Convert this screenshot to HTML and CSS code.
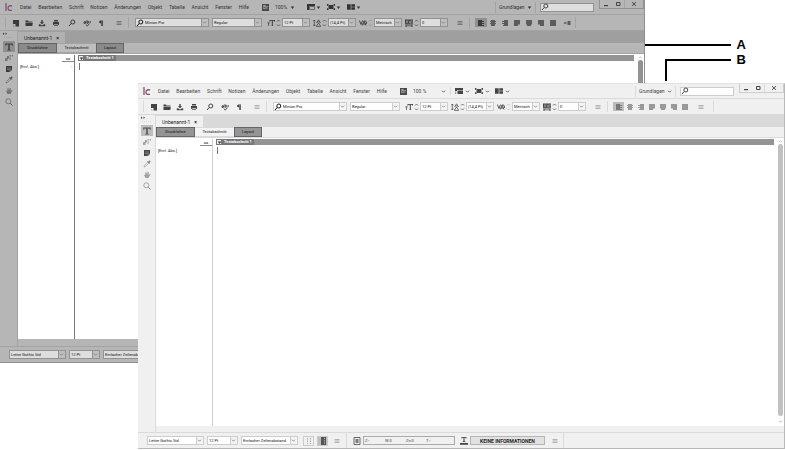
FILE: index.html
```html
<!DOCTYPE html>
<html lang="de">
<head>
<meta charset="utf-8">
<title>InCopy</title>
<link rel="stylesheet" href="styles.css">
</head>
<body>
<svg class="sprite" aria-hidden="true">
  <symbol id="logo" viewBox="0 0 8 8"><path d="M1 0v8M7 3Q3 2 3 5.300Q3 8 7 7.300" fill="none" stroke="#83526f" stroke-width="1.300"/></symbol>
  <symbol id="new" viewBox="0 0 8 8"><path d="M1 1h6v6.500H3.500V5H1z"/><path d="M1 5.500l2 2H1z" opacity=".3"/></symbol>
  <symbol id="open" viewBox="0 0 8 8"><path d="M.5 1.500h2.500l.5 1h4v1H.5zM.5 4h7.300L7.300 7H.5z"/></symbol>
  <symbol id="save" viewBox="0 0 8 8"><path d="M3.300 1h1.400v2.300h1.500L4 5.300 1.800 3.300h1.500zM.8 5.300h1.400l1 .9h1.600l1-.9h1.400v2H.8z"/></symbol>
  <symbol id="print" viewBox="0 0 8 8"><path d="M2 1h4v1.500H2zM1 3h6v3H6.200V5H1.800v1H1z"/><path d="M2 5.500h4V7H2z" opacity=".7"/></symbol>
  <symbol id="search" viewBox="0 0 8 8"><circle cx="4.800" cy="3" r="2" fill="none" stroke="currentColor"/><path d="M3.300 4.400L1 7" stroke="currentColor"/></symbol>
  <symbol id="spell" viewBox="0 0 8 8"><path d="M.5 3.500Q2.500 1 3 3.500Q1 3 1 4.500L3 4M4 1v3.500Q6.500 4 5.500 2.500L4 3M7.500 2Q6 3 7.500 4M3 5.500l1.200 1.700L6.500 4.500" fill="none" stroke="currentColor" stroke-width=".9"/></symbol>
  <symbol id="para" viewBox="0 0 8 8"><path d="M6 1.500H3.700Q2 1.600 2 3t2 1.400V7h.7V2h.5v5H6z"/></symbol>
  <symbol id="menu" viewBox="0 0 8 8"><path d="M1.500 2.500h5M1.500 4h5M1.500 5.500h5" stroke="currentColor" stroke-width=".7"/></symbol>
  <symbol id="size" viewBox="0 0 8 8"><path d="M2.500 1H8v1.700h-.6L7 1.800H5.800v4.700l.8.5H4.200l.6-.5V1.800H3.500l-.4.900h-.6zM.3 3.500h2.400v.8H1.900V7H1.200V4.300H.3z"/></symbol>
  <symbol id="lead" viewBox="0 0 8 8"><path d="M1.300 1v6M.3 2.200L1.300 1l1 1.200M.3 5.800L1.300 7l1-1.200M3.500 4L5.500.8 7.500 4M4.200 3h2.600M3.500 7l2-3 2 3M3 7.400h5" fill="none" stroke="currentColor" stroke-width=".7"/></symbol>
  <symbol id="kern" viewBox="0 0 8 8"><path d="M.4 1.500L2 5.500l1.500-4M3.300 6.500L5 2l2 4.500M4 5h2.500M5.500 1.500Q8 2 7.500 5" fill="none" stroke="currentColor" stroke-width=".9"/></symbol>
  <symbol id="track" viewBox="0 0 8 8"><path d="M0 .5h8v5H0zM.5 6h1v2h-1zM6.500 6h1v2h-1zM1 6.500h6v.7H1z"/><path d="M1 4.500l1-3 1 3M4 1.500l1 3 1-3M7 1v4" fill="none" stroke="#ddd" stroke-width=".5"/></symbol>
  <symbol id="step" viewBox="0 0 5 8"><path d="M1 2.500L2.500 1 4 2.500M1 5.500L2.500 7 4 5.500" fill="none" stroke="currentColor" stroke-width=".7"/></symbol>
  <symbol id="chev" viewBox="0 0 5 5"><path d="M1 1.700L2.500 3.200 4 1.700" fill="none" stroke="currentColor" stroke-width=".8"/></symbol>
  <symbol id="up" viewBox="0 0 5 5"><path d="M1 3.200L2.500 1.700 4 3.200" fill="none" stroke="currentColor" stroke-width=".8"/></symbol>
  <symbol id="tri" viewBox="0 0 5 5"><path d="M.8 1.500h3.400L2.500 4z"/></symbol>
  <symbol id="al" viewBox="0 0 8 8"><path d="M1 1h4v1h2v1H5v1h2v1H5v1h2v1H1z"/></symbol>
  <symbol id="ac" viewBox="0 0 8 8"><path d="M2 1h4v1h1v1H6v1h1v1H6v2H2V5H1V4h1V3H1V2h1z"/></symbol>
  <symbol id="ar" viewBox="0 0 8 8"><path d="M3 1h4v6H2V6h1V5H1V4h2V3H1V2h2z"/></symbol>
  <symbol id="jl" viewBox="0 0 8 8"><path d="M1 1h6v4.500H5V7H1z"/></symbol>
  <symbol id="jc" viewBox="0 0 8 8"><path d="M1 1h6v4.500H6V7H2V5.500H1z"/></symbol>
  <symbol id="jr" viewBox="0 0 8 8"><path d="M1 1h6v6H3V5.500H1z"/></symbol>
  <symbol id="jf" viewBox="0 0 8 8"><path d="M1 1h6v6H1z"/></symbol>
  <symbol id="flow" viewBox="0 0 8 8"><path d="M.5 4l2-1.500v1H4v1H2.500v1zM4.500 2h3v4h-3z"/></symbol>
  <symbol id="view" viewBox="0 0 8 8"><path d="M0 1h8v2H2v1H0zM2.500 3.500H8V7H2.500z"/><path d="M0 4.500h1.200V7H0z" opacity=".5"/></symbol>
  <symbol id="frame" viewBox="0 0 8 8"><path d="M0 1h8v2H2v4H0z"/><path d="M2.500 3.500h5v3h-5z" fill="none" stroke="currentColor" stroke-width=".6"/></symbol>
  <symbol id="screen" viewBox="0 0 8 8"><path d="M1.500 2h5v4h-5zM0 1h1.500v1H.8v1H0zM8 1H6.500v1h.7v1H8zM0 7h1.500V6H.8V5H0zM8 7H6.500V6h.7V5H8z"/></symbol>
  <symbol id="arrange" viewBox="0 0 8 8"><path d="M0 1.300h3.700v5.400H0zM4.300 1.300H8v2.400H4.300zM4.300 4.300H8v2.400H4.300z"/></symbol>
  <symbol id="type" viewBox="0 0 8 8"><path d="M.3.500h7.400v2.200h-.7l-.6-1.200H4.700v5l1.100.4v.6H2.200v-.6l1.100-.4v-5H1.600L1 2.700H.3z"/></symbol>
  <symbol id="notes" viewBox="0 0 8 8"><path d="M0 7V4.500l2-1V2h2v2L2.500 5v2zM4.500 1h1.300v1.500H4.500zM6.700 1H8v1.500H6.700zM4.500 3.300h1V6h-1z" opacity=".75"/></symbol>
  <symbol id="note" viewBox="0 0 8 8"><path d="M1 1h6v4L5 7H1z"/><path d="M2 3h4M2 4.500h3M5 7V5h2" stroke="#aaa" stroke-width=".5" fill="none"/></symbol>
  <symbol id="pipette" viewBox="0 0 8 8"><path d="M5 1.500L6.500.3l1.200 1.200L6.500 3l.3.600-.6.400L4 1.900l.4-.6z"/><path d="M4.500 2.500l-3 3L1 7l1.500-.5 3-3" fill="none" stroke="currentColor" stroke-width=".6"/></symbol>
  <symbol id="hand" viewBox="0 0 8 8"><path d="M1 4l1-.3.500.6L2 1.500l.8-.1.600 2L3.500.700h.8l.2 2.600.700-2.300.7.200-.3 2.800L7 2.800l.5.500L5.500 7h-3z" opacity=".75"/></symbol>
  <symbol id="zoomtool" viewBox="0 0 8 8"><circle cx="3.300" cy="3.300" r="2.500" fill="none" stroke="currentColor" stroke-width=".7"/><path d="M5.200 5.200L7.500 7.500" stroke="currentColor"/></symbol>
  <symbol id="collapse" viewBox="0 0 8 4"><path d="M0 .5l1.500 1.200L0 3zM2.500.5L4 1.700 2.500 3z"/></symbol>
  <symbol id="min" viewBox="0 0 8 8"><path d="M2 5h4v1.200H2z"/></symbol>
  <symbol id="max" viewBox="0 0 8 8"><path d="M2.500 2.500h3.500v3H2.500z" fill="none" stroke="currentColor"/></symbol>
  <symbol id="close" viewBox="0 0 8 8"><path d="M2 2l4 4M6 2L2 6" stroke="currentColor" stroke-width=".9"/></symbol>
  <symbol id="cols" viewBox="0 0 8 8"><path d="M2.500 1v6M5.500 1v6" stroke="currentColor" stroke-width=".8" stroke-dasharray="1.500 1"/></symbol>
  <symbol id="page" viewBox="0 0 8 8"><path d="M2 0h5v8H2z"/><path d="M5.500 1v6" stroke="#ccc" stroke-width=".8" stroke-dasharray="1 .8"/></symbol>
  <symbol id="info" viewBox="0 0 8 8"><path d="M1 .5h6v7H1z" fill="none" stroke="currentColor" stroke-width=".8"/><path d="M2.500 2h3v4h-3z" opacity=".7"/></symbol>
  <symbol id="fit" viewBox="0 0 8 8"><path d="M1.500 0h5v1.500h-.7L5.500.8h-1v3.500h.8V5H2.700v-.7h.8V.8h-1l-.3.700h-.7zM0 6h8v1.800H0z"/></symbol>
</svg>

<main class="stage">
  <section class="window dark" aria-label="Fenster A">
    <header class="menubar">
      <svg class="icon logo"><use href="#logo"/></svg>
      <nav class="menus"><button>Datei</button><button>Bearbeiten</button><button>Schrift</button><button>Notizen</button><button>Änderungen</button><button>Objekt</button><button>Tabelle</button><button>Ansicht</button><button>Fenster</button><button>Hilfe</button></nav>
      <button class="bridge" aria-label="Bridge">Br</button>
      <button class="zoom">100% <svg class="mini"><use href="#tri"/></svg></button>
      <div class="views">
        <button aria-label="Ansichtsoptionen"><svg class="icon"><use href="#frame"/></svg><svg class="mini"><use href="#tri"/></svg></button>
        <button aria-label="Bildschirmmodus"><svg class="icon"><use href="#screen"/></svg><svg class="mini"><use href="#tri"/></svg></button>
        <button aria-label="Dokumente anordnen"><svg class="icon"><use href="#arrange"/></svg><svg class="mini"><use href="#tri"/></svg></button>
      </div>
      <button class="workspace">Grundlagen <svg class="mini"><use href="#tri"/></svg></button>
      <label class="find"><svg class="icon"><use href="#search"/></svg><input type="search" aria-label="Suchen"></label>
      <div class="caption"><button aria-label="Minimieren"><svg class="icon"><use href="#min"/></svg></button><button aria-label="Maximieren"><svg class="icon"><use href="#max"/></svg></button><button class="wide" aria-label="Schließen"><svg class="icon"><use href="#close"/></svg></button></div>
    </header>
    <div class="toolbar">
      <div class="files">
        <button aria-label="Neu"><svg class="icon"><use href="#new"/></svg></button><button aria-label="Öffnen"><svg class="icon"><use href="#open"/></svg></button><button aria-label="Speichern"><svg class="icon"><use href="#save"/></svg></button><button class="wide" aria-label="Drucken"><svg class="icon"><use href="#print"/></svg></button><button class="wide" aria-label="Suchen"><svg class="icon"><use href="#search"/></svg></button><button aria-label="Rechtschreibung"><svg class="icon"><use href="#spell"/></svg></button><button class="wide" aria-label="Absatzmarken"><svg class="icon"><use href="#para"/></svg></button><button class="last" aria-label="Menü"><svg class="icon"><use href="#menu"/></svg></button>
      </div>
      <div class="font">
        <label class="combo family"><svg class="icon glass"><use href="#search"/></svg><select aria-label="Schriftart"><option>Minion Pro</option></select><svg class="mini"><use href="#chev"/></svg></label>
        <label class="combo style"><select aria-label="Schriftschnitt"><option>Regular</option></select><svg class="mini"><use href="#chev"/></svg></label>
      </div>
      <div class="metrics">
        <div class="metric"><svg class="icon"><use href="#size"/></svg><svg class="step"><use href="#step"/></svg><label class="combo"><select aria-label="Schriftgrad"><option>12 Pt</option></select><svg class="mini"><use href="#chev"/></svg></label></div>
        <div class="metric"><svg class="icon"><use href="#lead"/></svg><svg class="step"><use href="#step"/></svg><label class="combo"><select aria-label="Zeilenabstand"><option>(14,4 Pt)</option></select><svg class="mini"><use href="#chev"/></svg></label></div>
        <div class="metric"><svg class="icon"><use href="#kern"/></svg><svg class="step off"><use href="#step"/></svg><label class="combo"><select aria-label="Kerning"><option>Metrisch</option></select><svg class="mini"><use href="#chev"/></svg></label></div>
        <div class="metric"><svg class="icon"><use href="#track"/></svg><svg class="step"><use href="#step"/></svg><label class="combo"><select aria-label="Laufweite"><option>0</option></select><svg class="mini"><use href="#chev"/></svg></label></div>
      </div>
      <button class="more" aria-label="Menü"><svg class="icon"><use href="#menu"/></svg></button>
      <div class="align">
        <button class="on" aria-label="Linksbündig"><svg class="icon"><use href="#al"/></svg></button><button aria-label="Zentriert"><svg class="icon"><use href="#ac"/></svg></button><button aria-label="Rechtsbündig"><svg class="icon"><use href="#ar"/></svg></button><button aria-label="Blocksatz links"><svg class="icon"><use href="#jl"/></svg></button><button aria-label="Blocksatz zentriert"><svg class="icon"><use href="#jc"/></svg></button><button aria-label="Blocksatz rechts"><svg class="icon"><use href="#jr"/></svg></button><button aria-label="Blocksatz"><svg class="icon"><use href="#jf"/></svg></button><button class="spine" aria-label="Bündig am Rücken"><svg class="icon"><use href="#flow"/></svg></button>
      </div>
    </div>
    <div class="body">
      <aside class="tools">
        <svg class="collapse"><use href="#collapse"/></svg><i class="grip"></i>
        <button class="on" aria-label="Text"><svg class="icon"><use href="#type"/></svg></button><button aria-label="Position"><svg class="icon"><use href="#notes"/></svg></button><button aria-label="Notiz"><svg class="icon"><use href="#note"/></svg></button><button aria-label="Pipette"><svg class="icon"><use href="#pipette"/></svg></button><button aria-label="Hand"><svg class="icon"><use href="#hand"/></svg></button><button aria-label="Zoom"><svg class="icon"><use href="#zoomtool"/></svg></button>
      </aside>
      <div class="document">
        <div class="tabs"><div class="tab">Unbenannt-1 <button aria-label="Tab schließen">×</button></div></div>
        <div class="modes"><button>Druckfahne</button><button class="on">Textabschnitt</button><button>Layout</button></div>
        <div class="page">
          <div class="gutter"><div class="head">aa</div><div class="row"><span>[Einf. Abs.]</span><span>-</span></div></div>
          <div class="story"><div class="bar"><button aria-label="Abschnitt einklappen"><svg class="mini"><use href="#tri"/></svg></button><span>Textabschnitt 1</span></div><div class="caret"></div></div>
          <div class="scroll"><svg class="mini"><use href="#up"/></svg><i></i></div>
        </div>
      </div>
    </div>
    <footer class="status">
      <label class="combo long"><select aria-label="Schrift"><option>Letter Gothic Std</option></select><svg class="mini"><use href="#chev"/></svg></label>
      <label class="combo short"><select aria-label="Grad"><option>12 Pt</option></select><svg class="mini"><use href="#chev"/></svg></label>
      <label class="combo long"><select aria-label="Abstand"><option>Einfacher Zeilenabstand</option></select><svg class="mini"><use href="#chev"/></svg></label>
    </footer>
  </section>

  <div class="callout first"><i></i><b>A</b></div>
  <div class="callout second"><i></i><b>B</b></div>

  <section class="window light" aria-label="Fenster B">
    <header class="menubar">
      <svg class="icon logo"><use href="#logo"/></svg>
      <nav class="menus"><button>Datei</button><button>Bearbeiten</button><button>Schrift</button><button>Notizen</button><button>Änderungen</button><button>Objekt</button><button>Tabelle</button><button>Ansicht</button><button>Fenster</button><button>Hilfe</button></nav>
      <button class="bridge" aria-label="Bridge">Br</button>
      <button class="zoom">100 % <svg class="mini"><use href="#chev"/></svg></button>
      <div class="views">
        <button aria-label="Ansichtsoptionen"><svg class="icon"><use href="#view"/></svg><svg class="mini"><use href="#chev"/></svg></button>
        <button aria-label="Bildschirmmodus"><svg class="icon"><use href="#screen"/></svg><svg class="mini"><use href="#chev"/></svg></button>
        <button aria-label="Dokumente anordnen"><svg class="icon"><use href="#arrange"/></svg><svg class="mini"><use href="#chev"/></svg></button>
      </div>
      <button class="workspace">Grundlagen <svg class="mini"><use href="#chev"/></svg></button>
      <label class="find"><svg class="icon"><use href="#search"/></svg><input type="search" aria-label="Suchen"></label>
      <div class="caption"><button aria-label="Minimieren"><svg class="icon"><use href="#min"/></svg></button><button aria-label="Maximieren"><svg class="icon"><use href="#max"/></svg></button><button class="wide" aria-label="Schließen"><svg class="icon"><use href="#close"/></svg></button></div>
    </header>
    <div class="toolbar">
      <div class="files">
        <button aria-label="Neu"><svg class="icon"><use href="#new"/></svg></button><button aria-label="Öffnen"><svg class="icon"><use href="#open"/></svg></button><button aria-label="Speichern"><svg class="icon"><use href="#save"/></svg></button><button class="wide" aria-label="Drucken"><svg class="icon"><use href="#print"/></svg></button><button class="wide" aria-label="Suchen"><svg class="icon"><use href="#search"/></svg></button><button aria-label="Rechtschreibung"><svg class="icon"><use href="#spell"/></svg></button><button class="wide" aria-label="Absatzmarken"><svg class="icon"><use href="#para"/></svg></button><button class="last" aria-label="Menü"><svg class="icon"><use href="#menu"/></svg></button>
      </div>
      <div class="font">
        <label class="combo family"><svg class="icon glass"><use href="#search"/></svg><select aria-label="Schriftart"><option>Minion Pro</option></select><svg class="mini"><use href="#chev"/></svg></label>
        <label class="combo style"><select aria-label="Schriftschnitt"><option>Regular</option></select><svg class="mini"><use href="#chev"/></svg></label>
      </div>
      <div class="metrics">
        <div class="metric"><svg class="icon"><use href="#size"/></svg><svg class="step"><use href="#step"/></svg><label class="combo"><select aria-label="Schriftgrad"><option>12 Pt</option></select><svg class="mini"><use href="#chev"/></svg></label></div>
        <div class="metric"><svg class="icon"><use href="#lead"/></svg><svg class="step"><use href="#step"/></svg><label class="combo"><select aria-label="Zeilenabstand"><option>(14,4 Pt)</option></select><svg class="mini"><use href="#chev"/></svg></label></div>
        <div class="metric"><svg class="icon"><use href="#kern"/></svg><svg class="step off"><use href="#step"/></svg><label class="combo"><select aria-label="Kerning"><option>Metrisch</option></select><svg class="mini"><use href="#chev"/></svg></label></div>
        <div class="metric"><svg class="icon"><use href="#track"/></svg><svg class="step"><use href="#step"/></svg><label class="combo"><select aria-label="Laufweite"><option>0</option></select><svg class="mini"><use href="#chev"/></svg></label></div>
      </div>
      <button class="more" aria-label="Menü"><svg class="icon"><use href="#menu"/></svg></button>
      <div class="align">
        <button class="on" aria-label="Linksbündig"><svg class="icon"><use href="#al"/></svg></button><button aria-label="Zentriert"><svg class="icon"><use href="#ac"/></svg></button><button aria-label="Rechtsbündig"><svg class="icon"><use href="#ar"/></svg></button><button aria-label="Blocksatz links"><svg class="icon"><use href="#jl"/></svg></button><button aria-label="Blocksatz zentriert"><svg class="icon"><use href="#jc"/></svg></button><button aria-label="Blocksatz rechts"><svg class="icon"><use href="#jr"/></svg></button><button aria-label="Blocksatz"><svg class="icon"><use href="#jf"/></svg></button><button class="options" aria-label="Menü"><svg class="icon"><use href="#menu"/></svg></button>
      </div>
    </div>
    <div class="body">
      <aside class="tools">
        <svg class="collapse"><use href="#collapse"/></svg><i class="grip"></i>
        <button class="on" aria-label="Text"><svg class="icon"><use href="#type"/></svg></button><button aria-label="Position"><svg class="icon"><use href="#notes"/></svg></button><button aria-label="Notiz"><svg class="icon"><use href="#note"/></svg></button><button aria-label="Pipette"><svg class="icon"><use href="#pipette"/></svg></button><button aria-label="Hand"><svg class="icon"><use href="#hand"/></svg></button><button aria-label="Zoom"><svg class="icon"><use href="#zoomtool"/></svg></button>
      </aside>
      <div class="document">
        <div class="tabs"><div class="tab">Unbenannt-1 <button aria-label="Tab schließen">×</button></div></div>
        <div class="modes"><button>Druckfahne</button><button class="on">Textabschnitt</button><button>Layout</button></div>
        <div class="page">
          <div class="gutter"><div class="head">aa</div><div class="row"><span>[Einf. Abs.]</span><span>-</span></div></div>
          <div class="story"><div class="bar"><button aria-label="Abschnitt einklappen"><svg class="mini"><use href="#tri"/></svg></button><span>Textabschnitt 1</span></div><div class="caret"></div></div>
          <div class="scroll"><svg class="mini"><use href="#up"/></svg><i></i><svg class="mini"><use href="#chev"/></svg></div>
        </div>
      </div>
    </div>
    <footer class="status">
      <label class="combo long"><select aria-label="Schrift"><option>Letter Gothic Std</option></select><svg class="mini"><use href="#chev"/></svg></label>
      <label class="combo short"><select aria-label="Grad"><option>12 Pt</option></select><svg class="mini"><use href="#chev"/></svg></label>
      <label class="combo long"><select aria-label="Abstand"><option>Einfacher Zeilenabstand</option></select><svg class="mini"><use href="#chev"/></svg></label>
      <div class="toggles"><button aria-label="Spalten"><svg class="icon"><use href="#cols"/></svg></button><button class="on" aria-label="Seite"><svg class="icon"><use href="#page"/></svg></button></div>
      <button class="more" aria-label="Menü"><svg class="icon"><use href="#menu"/></svg></button>
      <div class="counts"><svg class="icon"><use href="#info"/></svg><div class="readout"><span>Z:-</span><span>W:0</span><span>Zn:0</span><span>T:-</span></div><svg class="icon"><use href="#fit"/></svg><button class="copyfit">KEINE INFORMATIONEN</button><button class="last" aria-label="Menü"><svg class="icon"><use href="#menu"/></svg></button></div>
    </footer>
  </section>
</main>
</body>
</html>
```
FILE: styles.css
```css
* { box-sizing: border-box; }
body { margin: 0; background: #fff; font: 5px/8px Roboto, "Liberation Sans", sans-serif; }
.sprite { display: none; }
button { display: flex; align-items: center; justify-content: center; margin: 0; padding: 0; border: 0; background: none; color: inherit; font: inherit; white-space: nowrap; }
select, input { appearance: none; min-width: 0; margin: 0; padding: 0; border: 0; border-radius: 0; outline: 0; background: none; color: inherit; font: inherit; }
svg { display: block; flex: none; fill: currentColor; }
.icon { width: 8px; height: 8px; }
.mini { width: 5px; height: 5px; }
.step { width: 5px; height: 8px; }
.step.off { opacity: .3; }

.stage { position: relative; min-height: 100vh; overflow: hidden; }
.window { position: absolute; display: flex; flex-direction: column; color: var(--text); background: var(--bar); border: solid var(--edge); border-width: 0 1px 1px 0; }
.dark { inset: 0 140px 87px 0; --bar: #b6b6b6; --line: #a3a3a3; --edge: #8f8f8f; --text: #333; --icon: #3a3a3a; --soft: #5c5c5c; --field: #dedede; --field-line: #929292; --arrow: #bebebe; --tabs: #9f9f9f; --tab: #b0b0b0; --mode: #8a8a8a; --mode-on: #bebebe; --on: #8f8f8f; --divide: #777; --thumb: #929292; --foot: 7px; }
.light { inset: 83px 0 1px 138px; --bar: #f0f0f0; --line: #dadada; --edge: #b9b9b9; --text: #444; --icon: #444; --soft: #999; --field: #fff; --field-line: #cdcdcd; --arrow: #f4f4f4; --tabs: #d9d9d9; --tab: #f0f0f0; --mode: #949494; --mode-on: #f3f3f3; --on: #bdbdbd; --divide: #cfcfcf; --thumb: #c1c1c1; --foot: 6px; border-top: 1px solid #e2e2e2; }

.menubar { display: flex; align-items: center; flex: none; height: 15px; padding-left: 5px; border-bottom: 1px solid var(--line); }
.menus { display: flex; justify-content: space-between; width: 229px; margin-left: 7px; }
.bridge { width: 7px; height: 7px; margin-left: 13px; background: #4a4a4a; color: #ccc; }
.zoom { justify-content: space-between; width: 20px; margin-left: 6px; }
.light .zoom { width: 33px; }
.views { display: flex; gap: 6px; margin-left: 12px; }
.views button { gap: 1px; }
.light .views { gap: 5px; margin-left: 4px; padding-left: 4px; border-left: 1px solid var(--line); }
.light .views button { gap: 2px; }
.workspace { justify-content: space-between; width: 41px; height: 11px; margin-left: auto; padding: 0 3px; border: solid var(--line); border-width: 0 1px; }
.find { display: flex; align-items: center; width: 54px; height: 9px; margin: 0 5px 0 4px; border: 1px solid var(--field-line); background: var(--field); color: #444; }
.find input { width: 40px; }
.caption { display: flex; align-self: flex-start; height: 9px; border: solid var(--field-line); border-width: 0 1px 1px; color: #444; }
.caption button { width: 12px; }
.caption button.wide { width: 19px; border-left: 1px solid var(--line); }

.toolbar { display: flex; align-items: center; flex: none; height: 16px; padding-left: 5px; border-bottom: 1px solid var(--line); color: var(--icon); }
.files { display: flex; align-items: center; height: 11px; padding-left: 3px; border: solid var(--line); border-width: 0 1px; }
.files button { width: 13px; }
.files button.wide { width: 16px; }
.files button.last { width: 19px; color: var(--soft); }
.font { display: flex; gap: 3px; margin-left: 6px; }
.combo { position: relative; display: flex; align-items: center; height: 9px; border: 1px solid var(--field-line); background: linear-gradient(270deg, var(--arrow) 6px, var(--field-line) 6px, var(--field-line) 7px, var(--field) 7px); color: #111; font-size: 4px; line-height: 7px; }
.combo select { flex: 1; height: 7px; padding-left: 1px; }
.combo .mini { position: absolute; right: 1px; top: 1px; color: #777; pointer-events: none; }
.family { width: 74px; }
.style { width: 50px; }
.metrics { display: flex; gap: 3px; margin-left: 5px; }
.metric { display: flex; align-items: center; gap: 1px; }
.metric .combo { width: 28px; }
.more { width: 18px; margin-left: 3px; color: var(--soft); }
.align { display: flex; align-items: center; height: 11px; padding: 0 1px 0 5px; border: solid var(--line); border-width: 0 1px; color: var(--soft); }
.align button { width: 12px; height: 9px; }
.light .align button { width: 11px; }
.align .spine { width: 15px; }
.light .align .options { width: 22px; }
.align button.on { background: var(--on); color: var(--icon); }
.light .align button.on { color: #777; }

.body { display: flex; flex: 1; min-height: 0; }
.tools { display: flex; flex-direction: column; align-items: center; flex: none; width: 18px; border-right: 1px solid var(--line); color: var(--icon); }
.collapse { width: 8px; height: 4px; margin: 1px 0 0 3px; align-self: flex-start; }
.grip { width: 9px; margin: 1px 0 3px; border-top: 1px dotted var(--line); }
.tools button { width: 12px; height: 11px; color: var(--soft); }
.tools button.on { background: var(--on); color: var(--icon); }
.tools button:nth-of-type(3) { color: var(--icon); }
.light .tools button { color: #888; }
.light .tools button.on, .light .tools button:nth-of-type(3) { color: #4a4a4a; }
.document { display: flex; flex: 1; flex-direction: column; min-width: 0; padding-bottom: var(--foot); }
.tabs { display: flex; align-items: flex-end; flex: none; height: 12px; background: var(--tabs); }
.tab { display: flex; align-items: center; gap: 4px; height: 11px; padding: 0 6px; background: var(--tab); color: #222; }
.tab button { font-weight: bold; }
.modes { display: flex; flex: none; height: 11px; border-bottom: 1px solid var(--line); font-size: 4px; }
.modes button { width: 39px; height: 10px; border: 1px solid #666; background: var(--mode); color: #111; }
.modes button.on { border-width: 1px 0; border-color: var(--line); background: var(--mode-on); }
.modes button:last-child { width: 28px; }
.page { display: flex; flex: 1; padding-top: 1px; background: #fff; color: #222; font-size: 4px; }
.gutter { flex: none; width: 57px; border-right: 1px solid var(--divide); }
.head { width: 12px; height: 7px; margin-left: auto; border-bottom: 1px solid #888; line-height: 7px; text-align: center; }
.row { display: flex; justify-content: space-between; padding: 1px 2px; }
.story { flex: 1; padding-left: 3px; }
.bar { display: flex; align-items: center; height: 6px; background: #949494; color: #fff; font: bold 4px/6px Roboto, sans-serif; }
.bar button { width: 6px; height: 6px; border: 1px solid #777; background: #eee; color: #333; }
.bar span { padding: 0 2px; background: #777; }
.caret { width: 1px; height: 7px; margin: 2px 0 0 1px; background: #777; }
.scroll { display: flex; flex-direction: column; align-items: center; flex: none; width: 10px; padding: 0 1px 2px 3px; color: #aaa; }
.scroll i { flex: 1; width: 5px; border-radius: 3px; background: var(--thumb); }
.scroll i + .mini { margin-top: 3px; }

.status { display: flex; align-items: center; flex: none; height: 16px; padding-left: 9px; border-top: 1px solid var(--line); gap: 3px; overflow: hidden; color: var(--icon); }
.long { flex: none; width: 57px; }
.short { flex: none; width: 31px; }
.toggles { display: flex; gap: 3px; margin-left: 2px; }
.toggles button { width: 11px; height: 10px; border: 1px solid #ccc; color: #999; }
.toggles button.on { background: var(--on); color: #555; }
.status .more { margin: 0 -3px 0 -3px; }
.counts { display: flex; align-items: center; height: 15px; padding-left: 6px; border: solid var(--line); border-width: 0 1px; gap: 2px; }
.readout { display: grid; grid-template-columns: 20px 21px 20px 1fr; width: 92px; height: 9px; margin-right: 3px; padding-left: 1px; border: 1px solid #aaa; font-size: 4px; line-height: 7px; }
.copyfit { width: 75px; height: 9px; border: 1px solid #b5b5b5; background: #e2e2e2; color: #222; font-weight: bold; }
.counts .last { width: 16px; color: var(--soft); }

.callout { position: absolute; right: 39px; display: flex; align-items: flex-start; justify-content: space-between; color: #000; font: bold 13px/14px "Liberation Sans", sans-serif; }
.callout i { border-top: 2px solid #000; margin-top: 6px; }
.first { top: 38px; width: 101px; }
.first i { width: 86px; }
.second { top: 53px; width: 81px; }
.second i { width: 66px; height: 22px; border-left: 2px solid #000; }
```
